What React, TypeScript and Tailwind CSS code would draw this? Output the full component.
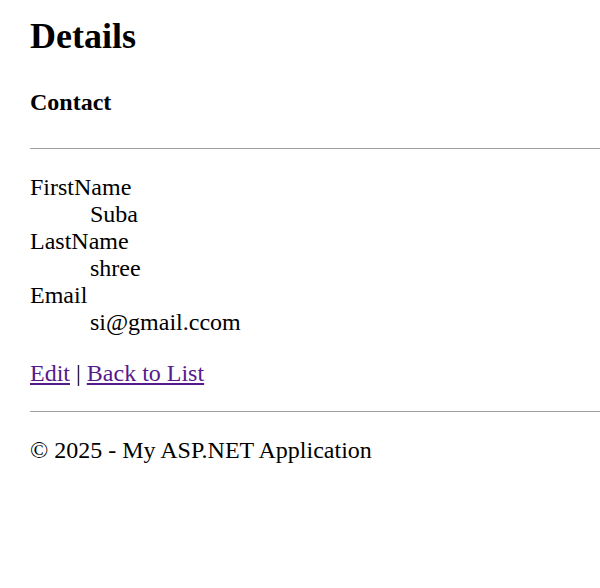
export default function App() {
  const fields = [
    { label: 'FirstName', value: 'Suba' },
    { label: 'LastName', value: 'shree' },
    { label: 'Email', value: 'si@gmail.ccom' },
  ];

  return (
    <div className="min-h-[588px] bg-white pl-[30px] pt-[16px] text-black" style={{ fontFamily: '"Liberation Serif", "Times New Roman", serif' }}>
      <h1 className="text-[36px] font-bold leading-[41px]">Details</h1>

      <div>
        <h3 className="mt-[32px] text-[24px] font-bold leading-[27px]">Contact</h3>
        <hr className="mt-[32px] border-t border-[#a0a0a0]" />
        <dl className="mt-[25px] text-[24px] leading-[27px]">
          {fields.map((f) => (
            <div key={f.label}>
              <dt>{f.label}</dt>
              <dd className="ml-[60px]">{f.value}</dd>
            </div>
          ))}
        </dl>
      </div>

      <p className="mt-[24px] text-[24px] leading-[27px]">
        <a href="#" className="text-[#551a8b] underline">Edit</a> |{' '}
        <a href="#" className="text-[#551a8b] underline">Back to List</a>
      </p>

      <hr className="mt-[24px] border-t border-[#a0a0a0]" />
      <footer className="mt-[25px] text-[24px] leading-[27px]">
        <p>© 2025 - My ASP.NET Application</p>
      </footer>
    </div>
  );
}
